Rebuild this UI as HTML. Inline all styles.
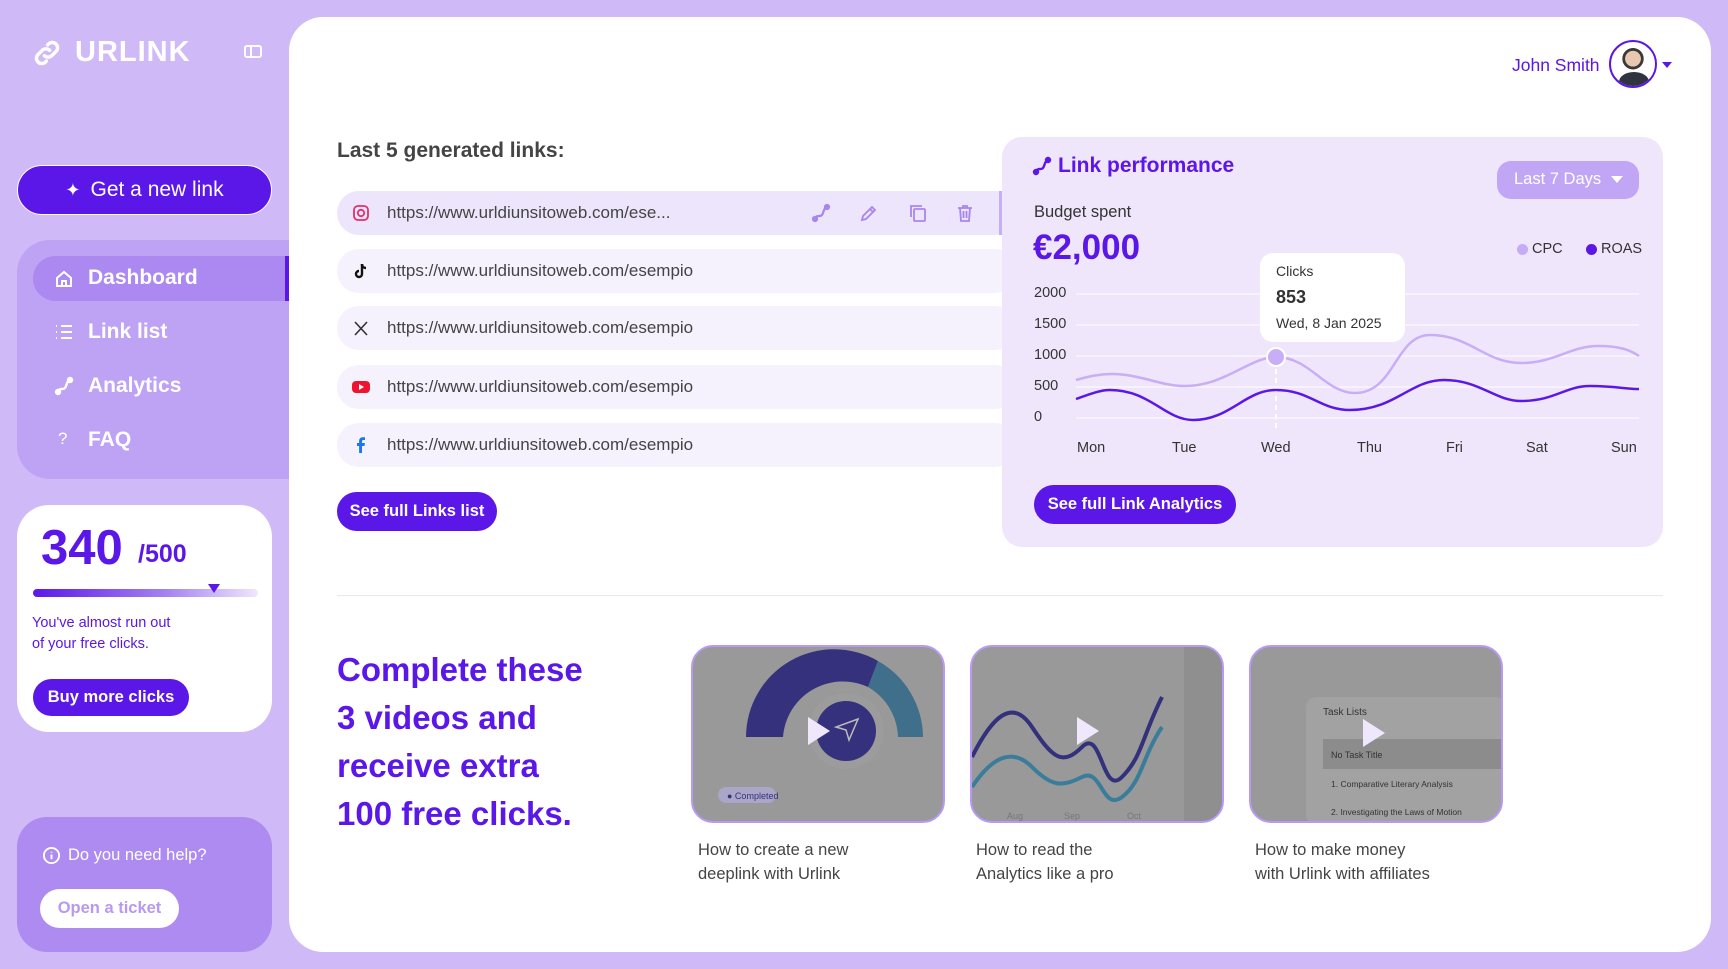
<!DOCTYPE html>
<html><head><meta charset="utf-8"><style>
*{margin:0;padding:0;box-sizing:border-box}
body{width:1728px;height:969px;background:#cfb9f7;font-family:"Liberation Sans",sans-serif;position:relative;overflow:hidden}
.a{position:absolute}
.btn{position:absolute;background:#5b17e8;color:#fff;border-radius:30px;font-weight:bold;display:flex;align-items:center;justify-content:center}
.row{position:absolute;left:337px;width:680px;height:44px;border-radius:22px;background:#f5f1fd}
.row .u{position:absolute;left:50px;top:12px;font-size:17px;color:#444}
.row .ic{position:absolute;left:14px;top:12px;width:20px;height:20px}
.nav{position:absolute;left:88px;font-size:21px;font-weight:bold;color:#fff}
.nico{position:absolute;left:54px;width:20px;height:20px}
.cap{position:absolute;font-size:16.5px;color:#444;line-height:24px}
.vid{position:absolute;top:645px;width:254px;height:178px;border-radius:22px;border:2px solid #b89af5;background:#999;overflow:hidden}
.yl{position:absolute;left:1034px;font-size:14.5px;color:#333}
.xl{position:absolute;top:440px;font-size:14.5px;color:#333}
.gl{position:absolute;left:1076px;width:563px;height:2px;background:#f7f2fe}
</style></head><body>
<!-- logo -->
<svg class="a" style="left:31px;top:37px" width="32" height="32" viewBox="0 0 24 24" fill="none" stroke="#fff" stroke-width="2.6" stroke-linecap="round"><path d="M10 14a4 4 0 0 0 5.6 0l3.5-3.5a4 4 0 0 0-5.6-5.6l-1 1"/><path d="M14 10a4 4 0 0 0-5.6 0l-3.5 3.5a4 4 0 0 0 5.6 5.6l1-1"/></svg>
<div class="a" style="left:75px;top:36px;font-size:29px;font-weight:bold;color:#fff;letter-spacing:1px">URLINK</div>
<div class="a" style="left:244px;top:45px;width:18px;height:13px;border:2px solid #fff;border-radius:3px"><div style="position:absolute;left:4px;top:0;width:2px;height:9px;background:#fff"></div></div>
<div class="btn" style="left:17px;top:165px;width:255px;height:50px;font-size:21px;font-weight:normal;border:1px solid #fff"><span style="margin-right:10px;font-size:18px">✦</span>Get a new link</div>
<!-- nav -->
<div class="a" style="left:17px;top:240px;width:272px;height:239px;background:#bea2f4;border-radius:33px 0 0 33px"></div>
<div class="a" style="left:33px;top:256px;width:256px;height:45px;background:#ab89f0;border-radius:23px 0 0 23px"></div>
<div class="a" style="left:285px;top:256px;width:4px;height:45px;background:#5b17e8"></div>
<svg class="nico" style="top:269px" viewBox="0 0 20 20" fill="none" stroke="#fff" stroke-width="2"><path d="M3 9l7-6 7 6v8H3z M8 17v-5h4v5"/></svg>
<div class="nav" style="top:266px">Dashboard</div>
<svg class="nico" style="top:322px" viewBox="0 0 20 20" fill="none" stroke="#fff" stroke-width="2"><path d="M2 4h1M2 10h1M2 16h1M7 4h11M7 10h11M7 16h11"/></svg>
<div class="nav" style="top:320px">Link list</div>
<svg class="nico" style="top:376px" viewBox="0 0 20 20" fill="none" stroke="#fff" stroke-width="2.4" stroke-linecap="round"><circle cx="4" cy="16" r="2" fill="#fff"/><circle cx="16" cy="4" r="2" fill="#fff"/><path d="M4 16c2-6 6 0 8-6s2-4 4-6"/></svg>
<div class="nav" style="top:374px">Analytics</div>
<div class="a" style="left:58px;top:429px;color:#fff;font-size:17px">?</div>
<div class="nav" style="top:428px">FAQ</div>
<!-- clicks card -->
<div class="a" style="left:17px;top:505px;width:255px;height:227px;background:#fff;border-radius:32px"></div>
<div class="a" style="left:41px;top:520px;font-size:49px;font-weight:bold;color:#5b17e8">340</div>
<div class="a" style="left:138px;top:540px;font-size:25px;font-weight:bold;color:#5b17e8">/500</div>
<div class="a" style="left:33px;top:589px;width:225px;height:8px;border-radius:4px;background:linear-gradient(90deg,#5b17e8,#a584f0 60%,#efe7fd)"></div>
<div class="a" style="left:208px;top:584px;width:0;height:0;border-left:6px solid transparent;border-right:6px solid transparent;border-top:9px solid #5b17e8"></div>
<div class="a" style="left:32px;top:613px;font-size:14.5px;line-height:21px;color:#5b17e8">You've almost run out<br>of your free clicks.</div>
<div class="btn" style="left:33px;top:679px;width:156px;height:37px;font-size:16.5px">Buy more clicks</div>
<!-- help -->
<div class="a" style="left:17px;top:817px;width:255px;height:135px;background:#ad8bf1;border-radius:30px"></div>
<svg class="a" style="left:42px;top:846px" width="19" height="19" viewBox="0 0 20 20" fill="none" stroke="#fff" stroke-width="2"><circle cx="10" cy="10" r="8"/><path d="M10 9v5M10 6v1"/></svg>
<div class="a" style="left:68px;top:846px;font-size:16.5px;color:#fff">Do you need help?</div>
<div class="btn" style="left:40px;top:889px;width:139px;height:39px;background:#fff;color:#b799f3;font-size:16.5px">Open a ticket</div>
<!-- main -->
<div class="a" style="left:289px;top:17px;width:1422px;height:935px;background:#fff;border-radius:34px"></div>
<div class="a" style="left:1512px;top:55px;font-size:17.5px;color:#5b17e8">John Smith</div>
<div class="a" style="left:1609px;top:40px;width:48px;height:48px;border-radius:50%;background:radial-gradient(circle at 50% 38%,#e8c8b0 0 22%,#3a3a3a 23% 30%,#fff 31%);border:2px solid #5b17e8;overflow:hidden"><div style="position:absolute;left:8px;top:30px;width:30px;height:20px;border-radius:50% 50% 0 0;background:#2f3440"></div></div>
<div class="a" style="left:1662px;top:62px;border-left:5px solid transparent;border-right:5px solid transparent;border-top:6px solid #5b17e8"></div>
<div class="a" style="left:337px;top:139px;font-size:21px;font-weight:bold;color:#444">Last 5 generated links:</div>
<div class="row" style="top:191px;background:#ede5fb"><svg class="ic" viewBox="0 0 20 20" fill="none" stroke="#e1306c" stroke-width="1.8"><rect x="3" y="3" width="14" height="14" rx="4"/><circle cx="10" cy="10" r="3.2"/></svg><div class="u">https://www.urldiunsitoweb.com/ese...</div>
<svg class="a" style="left:474px;top:12px" width="20" height="20" viewBox="0 0 20 20" fill="none" stroke="#a985f0" stroke-width="2.2" stroke-linecap="round"><circle cx="4" cy="16" r="2" fill="#a985f0"/><circle cx="16" cy="4" r="2" fill="#a985f0"/><path d="M4 16c2-6 6 0 8-6s2-4 4-6"/></svg>
<svg class="a" style="left:522px;top:12px" width="20" height="20" viewBox="0 0 20 20" fill="none" stroke="#a985f0" stroke-width="1.8"><path d="M3 17l1-4 9-9 3 3-9 9z M11 6l3 3"/></svg>
<svg class="a" style="left:571px;top:12px" width="20" height="20" viewBox="0 0 20 20" fill="none" stroke="#a985f0" stroke-width="1.8"><rect x="6" y="6" width="11" height="12" rx="1"/><path d="M3 14V3h11"/></svg>
<svg class="a" style="left:618px;top:12px" width="20" height="20" viewBox="0 0 20 20" fill="none" stroke="#a985f0" stroke-width="1.8"><path d="M3 5h14M8 5V3h4v2M5 5l1 13h8l1-13M8.5 8v7M11.5 8v7"/></svg></div>
<div class="row" style="top:249px"><svg class="ic" viewBox="0 0 20 20"><path d="M11 3v10a3 3 0 1 1-3-3" fill="none" stroke="#111" stroke-width="2.4"/><path d="M11 3c0 3 2 4 4 4" fill="none" stroke="#111" stroke-width="2.4"/></svg><div class="u">https://www.urldiunsitoweb.com/esempio</div></div>
<div class="row" style="top:306px"><svg class="ic" viewBox="0 0 20 20" stroke="#333" stroke-width="1.6"><path d="M4 4l12 13M16 4L4 17"/></svg><div class="u">https://www.urldiunsitoweb.com/esempio</div></div>
<div class="row" style="top:365px"><svg class="ic" viewBox="0 0 20 20"><rect x="1" y="4" width="18" height="12" rx="4" fill="#f0132f"/><path d="M8 7l5 3-5 3z" fill="#fff"/></svg><div class="u">https://www.urldiunsitoweb.com/esempio</div></div>
<div class="row" style="top:423px"><svg class="ic" viewBox="0 0 20 20"><path d="M11 18v-7h2.5l.4-3H11V6.5c0-.9.3-1.5 1.5-1.5H14V2.3c-.3 0-1.2-.1-2.2-.1-2.2 0-3.7 1.3-3.7 3.8V8H6v3h2.1v7z" fill="#1877f2"/></svg><div class="u">https://www.urldiunsitoweb.com/esempio</div></div>
<div class="btn" style="left:337px;top:492px;width:160px;height:39px;font-size:16.5px">See full Links list</div>
<!-- chart card -->
<div class="a" style="left:1002px;top:137px;width:661px;height:410px;background:#efe6fc;border-radius:20px"></div>
<div class="a" style="left:999px;top:191px;width:3px;height:44px;background:#c5aef5"></div>
<svg class="a" style="left:1032px;top:156px" width="20" height="20" viewBox="0 0 20 20" fill="none" stroke="#5b17e8" stroke-width="2.4" stroke-linecap="round"><circle cx="4" cy="16" r="2" fill="#5b17e8"/><circle cx="16" cy="4" r="2" fill="#5b17e8"/><path d="M4 16c2-6 6 0 8-6s2-4 4-6"/></svg>
<div class="a" style="left:1058px;top:154px;font-size:21px;font-weight:bold;color:#5b17e8">Link performance</div>
<div class="a" style="left:1497px;top:161px;width:142px;height:38px;background:#c1a6f5;border-radius:14px;color:#fff;font-size:16.5px;padding:9px 0 0 17px">Last 7 Days<span style="position:absolute;right:16px;top:15px;border-left:6px solid transparent;border-right:6px solid transparent;border-top:7px solid #fff"></span></div>
<div class="a" style="left:1034px;top:203px;font-size:16.5px;color:#333">Budget spent</div>
<div class="a" style="left:1033px;top:228px;font-size:35px;font-weight:bold;color:#5b17e8">€2,000</div>
<div class="a" style="left:1517px;top:244px;width:11px;height:11px;border-radius:50%;background:#c6acf6"></div>
<div class="a" style="left:1532px;top:241px;font-size:14.5px;color:#333">CPC</div>
<div class="a" style="left:1586px;top:244px;width:11px;height:11px;border-radius:50%;background:#5b17e8"></div>
<div class="a" style="left:1601px;top:241px;font-size:14.5px;color:#333">ROAS</div>
<div class="gl" style="top:293px"></div><div class="gl" style="top:324px"></div><div class="gl" style="top:355px"></div><div class="gl" style="top:386px"></div><div class="gl" style="top:417px"></div>
<div class="yl" style="top:285px">2000</div><div class="yl" style="top:316px">1500</div><div class="yl" style="top:347px">1000</div><div class="yl" style="top:378px">500</div><div class="yl" style="top:409px">0</div>
<div class="xl" style="left:1077px">Mon</div><div class="xl" style="left:1172px">Tue</div><div class="xl" style="left:1261px">Wed</div><div class="xl" style="left:1357px">Thu</div><div class="xl" style="left:1446px">Fri</div><div class="xl" style="left:1526px">Sat</div><div class="xl" style="left:1611px">Sun</div>
<svg class="a" style="left:0;top:0" width="1728" height="969">
<line x1="1276" y1="360" x2="1276" y2="432" stroke="#fff" stroke-width="2" stroke-dasharray="5 4"/>
<path d="M1076 380 C1090 376 1100 374 1112 374 C1140 374 1160 386 1185 386 C1225 386 1250 357 1276 357 C1310 357 1325 393 1355 393 C1395 393 1395 335 1430 335 C1470 335 1485 363 1521 363 C1555 363 1570 346 1598 346 C1620 346 1630 350 1639 356" fill="none" stroke="#c7aef6" stroke-width="2.5"/>
<path d="M1076 399 C1090 394 1100 390 1110 390 C1150 390 1165 420 1193 420 C1230 420 1245 390 1276 390 C1310 390 1320 410 1350 410 C1395 410 1410 380 1444 380 C1480 380 1495 401 1521 401 C1555 401 1565 386 1590 386 C1615 386 1625 389 1639 389" fill="none" stroke="#5b17e8" stroke-width="2.5"/>
<circle cx="1276" cy="357" r="9" fill="#c7aef6" stroke="#fff" stroke-width="2"/>
</svg>
<div class="a" style="left:1260px;top:253px;width:145px;height:89px;background:#fff;border-radius:13px;padding:10px 0 0 16px;color:#333">
<div style="font-size:14px">Clicks</div><div style="font-size:18px;font-weight:bold;margin-top:8px">853</div><div style="font-size:14px;margin-top:7px">Wed, 8 Jan 2025</div></div>
<div class="btn" style="left:1034px;top:485px;width:202px;height:39px;font-size:16.5px">See full Link Analytics</div>
<div class="a" style="left:337px;top:595px;width:1326px;height:1px;background:#ebe4f8"></div>
<div class="a" style="left:337px;top:646px;font-size:33px;line-height:48px;font-weight:bold;color:#5b17e8">Complete these<br>3 videos and<br>receive extra<br>100 free clicks.</div>
<!-- videos -->
<div class="vid" style="left:691px"><svg width="254" height="178"><path d="M53 90 A88 88 0 0 1 185 14 L175 40 A60 60 0 0 0 90 90Z" fill="#35317c"/><path d="M185 14 A88 88 0 0 1 230 90 L205 90 A60 60 0 0 0 175 40Z" fill="#3f6f8a"/><circle cx="153" cy="84" r="38" fill="#9c9c9c"/><circle cx="153" cy="84" r="30" fill="#35317c"/><path d="M165 72l-22 8 10 3 3 10z" fill="none" stroke="#bbb" stroke-width="1.5"/><path d="M115 70l22 14-22 14z" fill="#efe8fc"/><rect x="25" y="140" width="58" height="16" rx="8" fill="#a9a6c8"/><text x="34" y="152" font-size="9" fill="#35317c" font-family="Liberation Sans">● Completed</text></svg></div>
<div class="vid" style="left:970px"><svg width="254" height="178"><path d="M0 110 C20 70 40 50 60 80 S90 120 110 100 S130 150 150 130 S170 90 190 50" fill="none" stroke="#33307c" stroke-width="4"/><path d="M0 140 C20 110 40 100 60 120 S90 140 110 130 S130 165 150 150 S170 110 190 80" fill="none" stroke="#3a7d9a" stroke-width="4"/><path d="M105 70l22 14-22 14z" fill="#efe8fc"/><text x="35" y="172" font-size="9" fill="#777" font-family="Liberation Sans">Aug</text><text x="92" y="172" font-size="9" fill="#777" font-family="Liberation Sans">Sep</text><text x="155" y="172" font-size="9" fill="#777" font-family="Liberation Sans">Oct</text><rect x="212" y="0" width="42" height="178" fill="#8f8f8f"/></svg></div>
<div class="vid" style="left:1249px"><svg width="254" height="178"><rect x="55" y="50" width="199" height="128" rx="10" fill="#a2a2a2"/><text x="72" y="68" font-size="10" fill="#333" font-family="Liberation Sans">Task Lists</text><rect x="72" y="92" width="182" height="30" fill="#8c8c8c"/><text x="80" y="111" font-size="9" fill="#333" font-family="Liberation Sans">No    Task Title</text><text x="80" y="140" font-size="8.5" fill="#333" font-family="Liberation Sans">1.    Comparative Literary Analysis</text><text x="80" y="168" font-size="8.5" fill="#333" font-family="Liberation Sans">2.    Investigating the Laws of Motion</text><path d="M112 72l22 14-22 14z" fill="#efe8fc"/></svg></div>
<div class="cap" style="left:698px;top:838px">How to create a new<br>deeplink with Urlink</div>
<div class="cap" style="left:976px;top:838px">How to read the<br>Analytics like a pro</div>
<div class="cap" style="left:1255px;top:838px">How to make money<br>with Urlink with affiliates</div>
</body></html>
